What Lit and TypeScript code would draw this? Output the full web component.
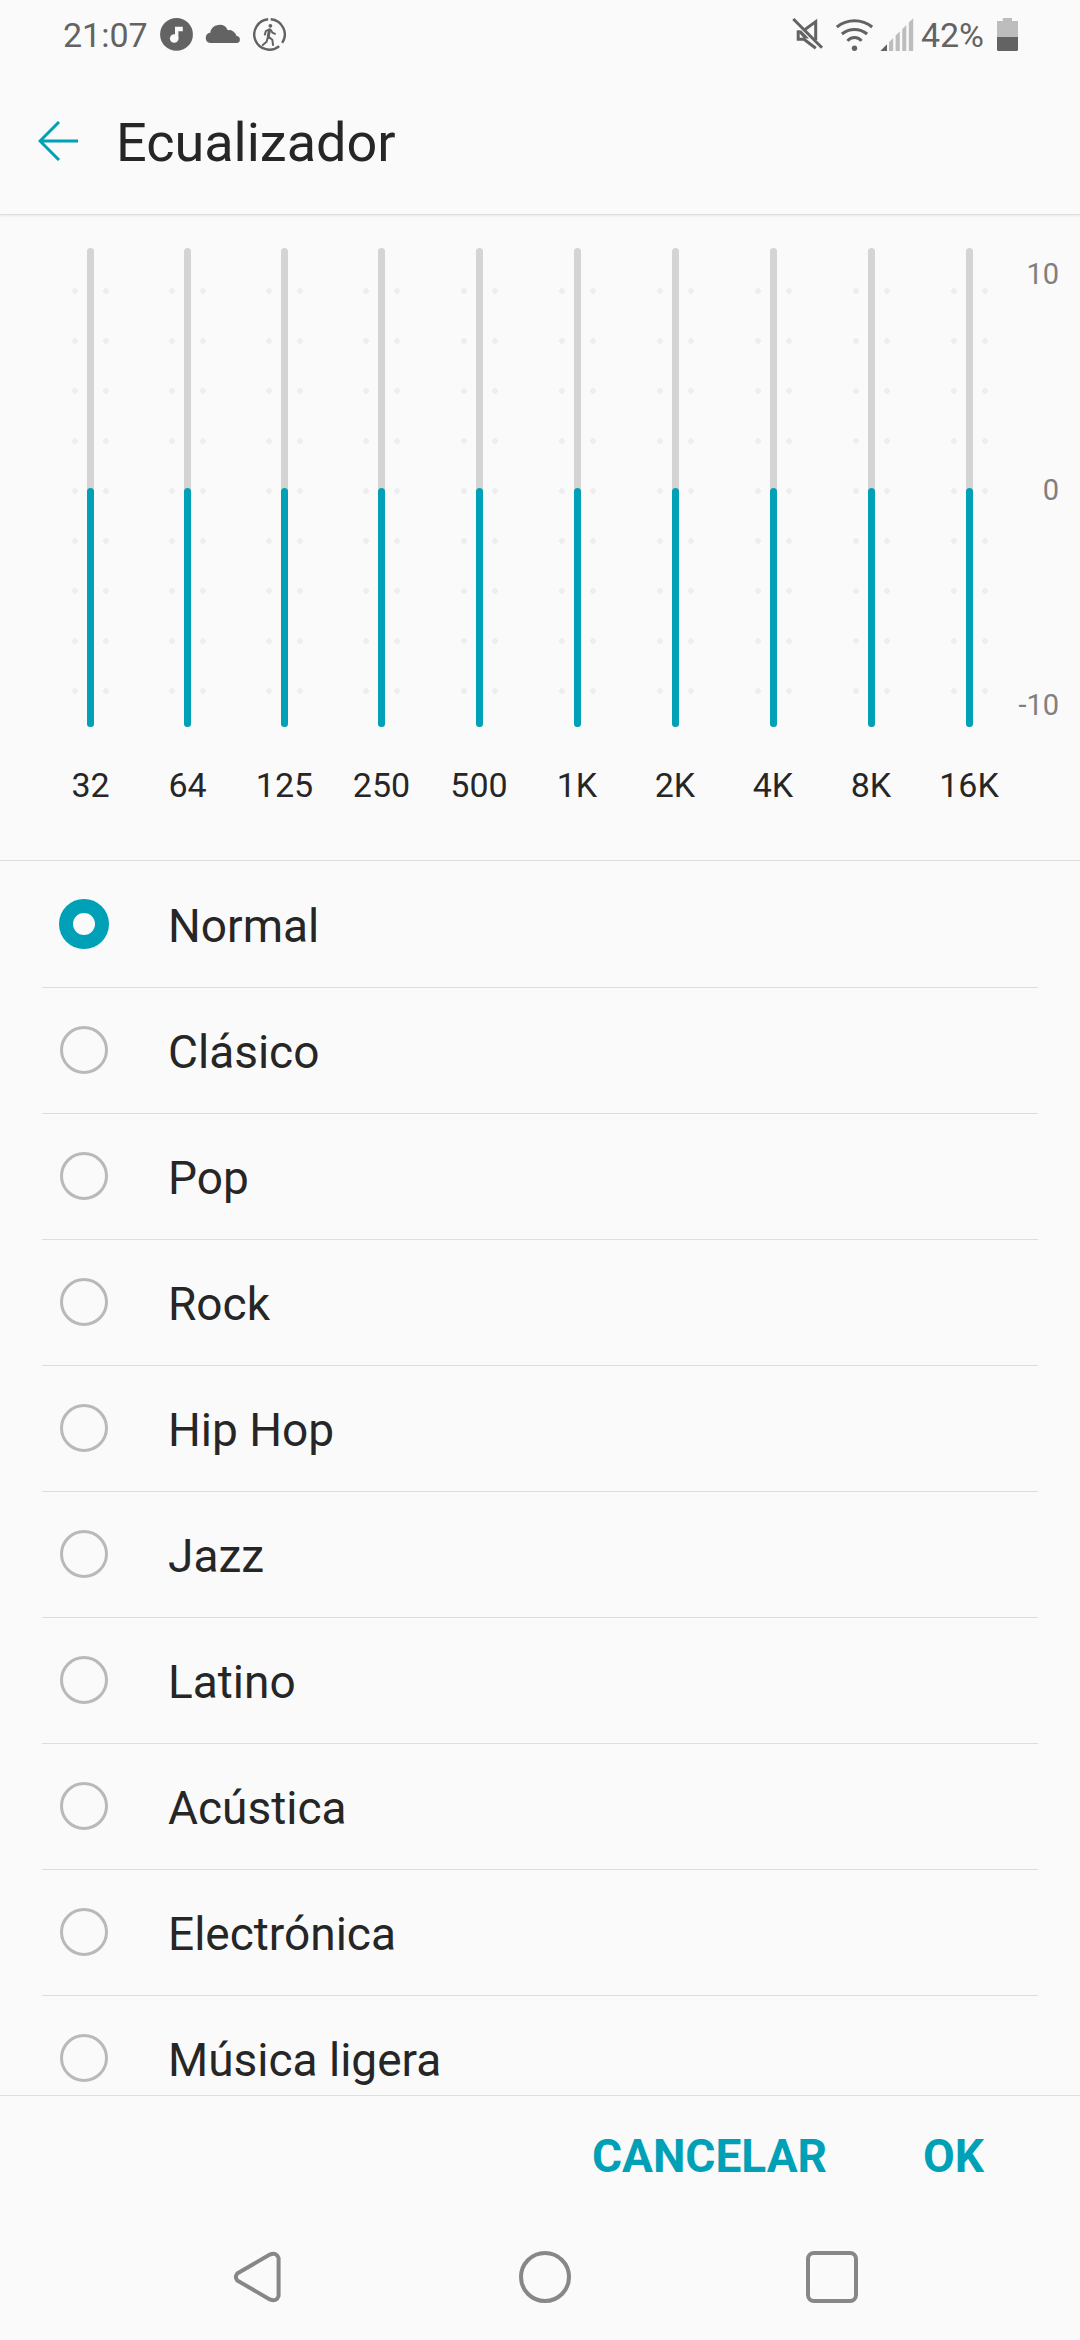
import { LitElement, html, css, svg } from "lit";
import { customElement, state } from "lit/decorators.js";

interface Band {
  label: string;
  gain: number;
}

const MIN = -10;
const MAX = 10;

const PRESETS = [
  "Normal",
  "Clásico",
  "Pop",
  "Rock",
  "Hip Hop",
  "Jazz",
  "Latino",
  "Acústica",
  "Electrónica",
  "Música ligera",
];

const FREQUENCIES = ["32", "64", "125", "250", "500", "1K", "2K", "4K", "8K", "16K"];

@customElement("status-bar")
class StatusBar extends LitElement {
  static styles = css`
    :host {
      display: flex;
      justify-content: space-between;
      align-items: center;
      height: 70px;
      padding: 0 62px 0 63px;
      color: #636363;
      font-size: 34px;
      line-height: 40px;
    }
    .group {
      display: flex;
      align-items: center;
      gap: 12px;
    }
    .system {
      gap: 6px;
    }
    svg {
      display: block;
      flex: none;
    }
    .solid {
      fill: currentColor;
    }
    .faint {
      fill: #bdbdbd;
    }
    .cutout {
      fill: #fafafa;
    }
    .line {
      fill: none;
      stroke: currentColor;
      stroke-width: 3;
    }
    .thin {
      stroke-width: 2;
      stroke-linejoin: round;
      stroke-linecap: round;
    }
    .ring {
      stroke-width: 2.4;
    }
  `;

  render() {
    return html`
      <div class="group">
        <time>21:07</time>
        <svg width="33" height="34" viewBox="0 0 33 34" aria-hidden="true">
          <circle class="solid" cx="16.5" cy="16.4" r="16.4" />
          <path class="cutout" d="M15 8.8H22.8V13.2H18.4V20.6H15Z" />
          <circle class="cutout" cx="14.2" cy="20.5" r="4.3" />
        </svg>
        <svg width="36" height="34" viewBox="0 0 36 34" aria-hidden="true">
          <path
            class="solid"
            d="M5.3 25A5.2 5.2 0 0 1 5.2 14.7A9.3 9.3 0 0 1 22.8 12.2A8 8 0 0 1 31.6 18.1A3.5 3.5 0 0 1 32.2 25Z"
          />
        </svg>
        <svg width="33" height="34" viewBox="0 0 33 34" aria-hidden="true">
          <path class="line ring" d="M17.7 1.3A15.2 15.2 0 0 1 29.2 24.9" />
          <path class="line ring" d="M26.2 28.1A15.2 15.2 0 1 1 15.2 1.3" />
          <circle class="solid" cx="17.4" cy="7.8" r="1.9" />
          <path class="line" d="M16.6 11.3L15.2 18.6" />
          <path
            class="line thin"
            d="M16.8 11.2L12.8 13.2L11.8 16.6M17.8 12L19.3 14.6L22 15.8M15.4 18.6L19.4 22L20 27M15 18.8L13.6 23.8L9.8 27"
          />
        </svg>
      </div>
      <div class="group system">
        <svg width="38" height="34" viewBox="0 0 38 34" aria-hidden="true">
          <path class="line" d="M6.2 12.5V21.2H12L23.8 30.2" />
          <path class="line" d="M13 11.5L23.7 3.6V22" />
          <path class="solid" d="M5 12.4H9.2L17 20.5L12 20.5Z" />
          <path class="line" d="M1.3 1L30 29.8" />
        </svg>
        <svg width="38" height="34" viewBox="0 0 38 34" aria-hidden="true">
          <path class="line" d="M.8 9A28 28 0 0 1 36.2 9M5.9 16A19.5 19.5 0 0 1 31.1 16M11.5 22.9A8.8 8.8 0 0 1 25.5 22.9" />
          <circle class="solid" cx="18.5" cy="30.3" r="2.7" />
        </svg>
        <svg width="35" height="34" viewBox="0 0 35 34" aria-hidden="true">
          <path class="solid" d="M.3 33L7 26.2V33Z" />
          <path
            class="faint"
            d="M9 33V24.2L13.2 20V33ZM15.6 33V17.6L19.8 13.4V33ZM22.2 33V11.2L26.3 7V33ZM28.8 33V4.6L33.2.2V33Z"
          />
        </svg>
        <span>42%</span>
        <svg width="28" height="34" viewBox="0 0 28 34" aria-hidden="true">
          <path class="faint" d="M12.8 0H22V3H28V19H7V3H12.8Z" />
          <path class="solid" d="M7 19H28V31.5Q28 33 26.5 33H8.5Q7 33 7 31.5Z" />
        </svg>
      </div>
    `;
  }
}

@customElement("equalizer-bands")
class EqualizerBands extends LitElement {
  static styles = css`
    :host {
      display: flex;
      padding: 33px 0 55px 42px;
    }
    .bands {
      flex: 1;
      display: grid;
      grid-template-columns: repeat(4, 97fr) repeat(6, 98fr);
    }
    .band {
      display: flex;
      flex-direction: column;
      align-items: center;
      gap: 38px;
      color: #262626;
      font-size: 34px;
      line-height: 40px;
    }
    .slider {
      display: grid;
      justify-items: center;
      height: 479px;
    }
    .slider > * {
      grid-area: 1 / 1;
    }
    .dots {
      width: 37px;
      height: 450px;
      margin-top: 18px;
      background-image: radial-gradient(circle closest-side, #eeeeee 90%, transparent),
        radial-gradient(circle closest-side, #eeeeee 90%, transparent);
      background-size: 6px 50px;
      background-position: left top, right top;
      background-repeat: repeat-y;
    }
    .track,
    .fill {
      width: 7px;
      border-radius: 4px;
      pointer-events: none;
    }
    .track {
      height: 100%;
      background: #d4d4d4;
    }
    .fill {
      align-self: end;
      background: #00a0b6;
    }
    .range {
      appearance: none;
      writing-mode: vertical-lr;
      direction: rtl;
      width: 37px;
      height: 100%;
      margin: 0;
      background: none;
      opacity: 0;
    }
    .scale {
      display: flex;
      flex-direction: column;
      justify-content: space-between;
      align-items: flex-end;
      box-sizing: border-box;
      width: 62px;
      height: 479px;
      padding: 8px 21px 4px 0;
      color: #808080;
      font-size: 29px;
      line-height: 36px;
      white-space: nowrap;
    }
  `;

  @state() private bands: Band[] = FREQUENCIES.map((label) => ({ label, gain: 0 }));

  private setGain(index: number, event: Event) {
    const gain = Number((event.target as HTMLInputElement).value);
    this.bands = this.bands.map((band, i) => (i === index ? { ...band, gain } : band));
  }

  render() {
    return html`
      <div class="bands">
        ${this.bands.map(
          (band, i) => html`
            <label class="band">
              <span class="slider">
                <span class="dots"></span>
                <span class="track"></span>
                <span class="fill" style="height: ${((band.gain - MIN) / (MAX - MIN)) * 100}%"></span>
                <input
                  class="range"
                  type="range"
                  min=${MIN}
                  max=${MAX}
                  .value=${String(band.gain)}
                  @input=${(e: Event) => this.setGain(i, e)}
                />
              </span>
              <span>${band.label}</span>
            </label>
          `
        )}
      </div>
      <div class="scale">
        <span>10</span>
        <span>0</span>
        <span>-10</span>
      </div>
    `;
  }
}

@customElement("preset-list")
class PresetList extends LitElement {
  static styles = css`
    :host {
      display: block;
      overflow-y: auto;
      scrollbar-width: none;
    }
    .list {
      margin: 0;
      padding: 0 42px;
      list-style: none;
    }
    .row {
      box-sizing: border-box;
      height: 126px;
    }
    .row + .row {
      padding-bottom: 1px;
      border-top: 1px solid #dedede;
    }
    .option {
      display: flex;
      align-items: center;
      gap: 59px;
      height: 100%;
      padding-left: 17px;
      color: #262626;
      font-size: 46px;
      line-height: 54px;
    }
    .radio {
      appearance: none;
      box-sizing: border-box;
      flex: none;
      width: 48px;
      height: 48px;
      margin: 1px;
      border: 3px solid #b9b9b9;
      border-radius: 50%;
    }
    .radio:checked {
      width: 50px;
      height: 50px;
      margin: 0;
      border: 14px solid #00a0b6;
    }
    .name {
      padding-top: 4px;
    }
  `;

  @state() private selected = PRESETS[0];

  render() {
    return html`
      <ul class="list">
        ${PRESETS.map(
          (name) => html`
            <li class="row">
              <label class="option">
                <input
                  class="radio"
                  type="radio"
                  name="preset"
                  .checked=${name === this.selected}
                  @change=${() => (this.selected = name)}
                />
                <span class="name">${name}</span>
              </label>
            </li>
          `
        )}
      </ul>
    `;
  }
}

const NAV_ITEMS = [
  {
    label: "Atrás",
    shape: svg`<path d="M6.2 23.6L38.8 4.6Q45.6 1.8 47.6 8V46Q45.6 52.2 38.8 49.4L6.2 30.4Q3.6 27 6.2 23.6Z" />`,
  },
  { label: "Inicio", shape: svg`<circle cx="27" cy="27" r="24" />` },
  { label: "Recientes", shape: svg`<rect x="3" y="3" width="48" height="48" rx="6" />` },
];

@customElement("app-root")
class AppRoot extends LitElement {
  static styles = css`
    :host {
      display: flex;
      flex-direction: column;
      height: 100vh;
      background: #fafafa;
      font-family: Roboto, "Liberation Sans", sans-serif;
    }
    .button {
      padding: 0;
      border: 0;
      background: none;
      color: #00a0b6;
      font: inherit;
    }
    .icon {
      display: block;
      fill: none;
      stroke: currentColor;
      stroke-width: 4;
    }
    .header {
      display: flex;
      align-items: center;
      gap: 36px;
      box-sizing: border-box;
      height: 145px;
      padding: 0 38px 2px;
      border-bottom: 1px solid #dedede;
      box-shadow: 0 1px 2px #00000014;
    }
    .arrow {
      stroke-width: 3;
    }
    .title {
      margin: 0;
      padding-top: 4px;
      color: #262626;
      font-size: 54px;
      font-weight: 400;
      line-height: 64px;
    }
    .presets {
      flex: 1;
      min-height: 0;
      border-top: 1px solid #dedede;
    }
    .actions {
      display: flex;
      justify-content: flex-end;
      align-items: center;
      gap: 96px;
      box-sizing: border-box;
      height: 119px;
      padding: 2px 96px 0;
      border-top: 1px solid #dedede;
      font-size: 46px;
      font-weight: 700;
      line-height: 54px;
    }
    .nav {
      display: grid;
      grid-template-columns: repeat(3, 1fr);
      place-items: center;
      height: 126px;
      padding: 0 105px 0 114px;
    }
    .nav .button {
      color: #878787;
    }
  `;

  render() {
    return html`
      <status-bar></status-bar>
      <header class="header">
        <button class="button" aria-label="Volver">
          <svg class="icon arrow" width="42" height="40" viewBox="0 0 42 40">
            <path d="M40 20H2M21 1L2 20L21 39" />
          </svg>
        </button>
        <h1 class="title">Ecualizador</h1>
      </header>
      <equalizer-bands></equalizer-bands>
      <preset-list class="presets"></preset-list>
      <div class="actions">
        <button class="button">CANCELAR</button>
        <button class="button">OK</button>
      </div>
      <nav class="nav">
        ${NAV_ITEMS.map(
          (item) => html`
            <button class="button" aria-label=${item.label}>
              <svg class="icon" width="54" height="54" viewBox="0 0 54 54">${item.shape}</svg>
            </button>
          `
        )}
      </nav>
    `;
  }
}
